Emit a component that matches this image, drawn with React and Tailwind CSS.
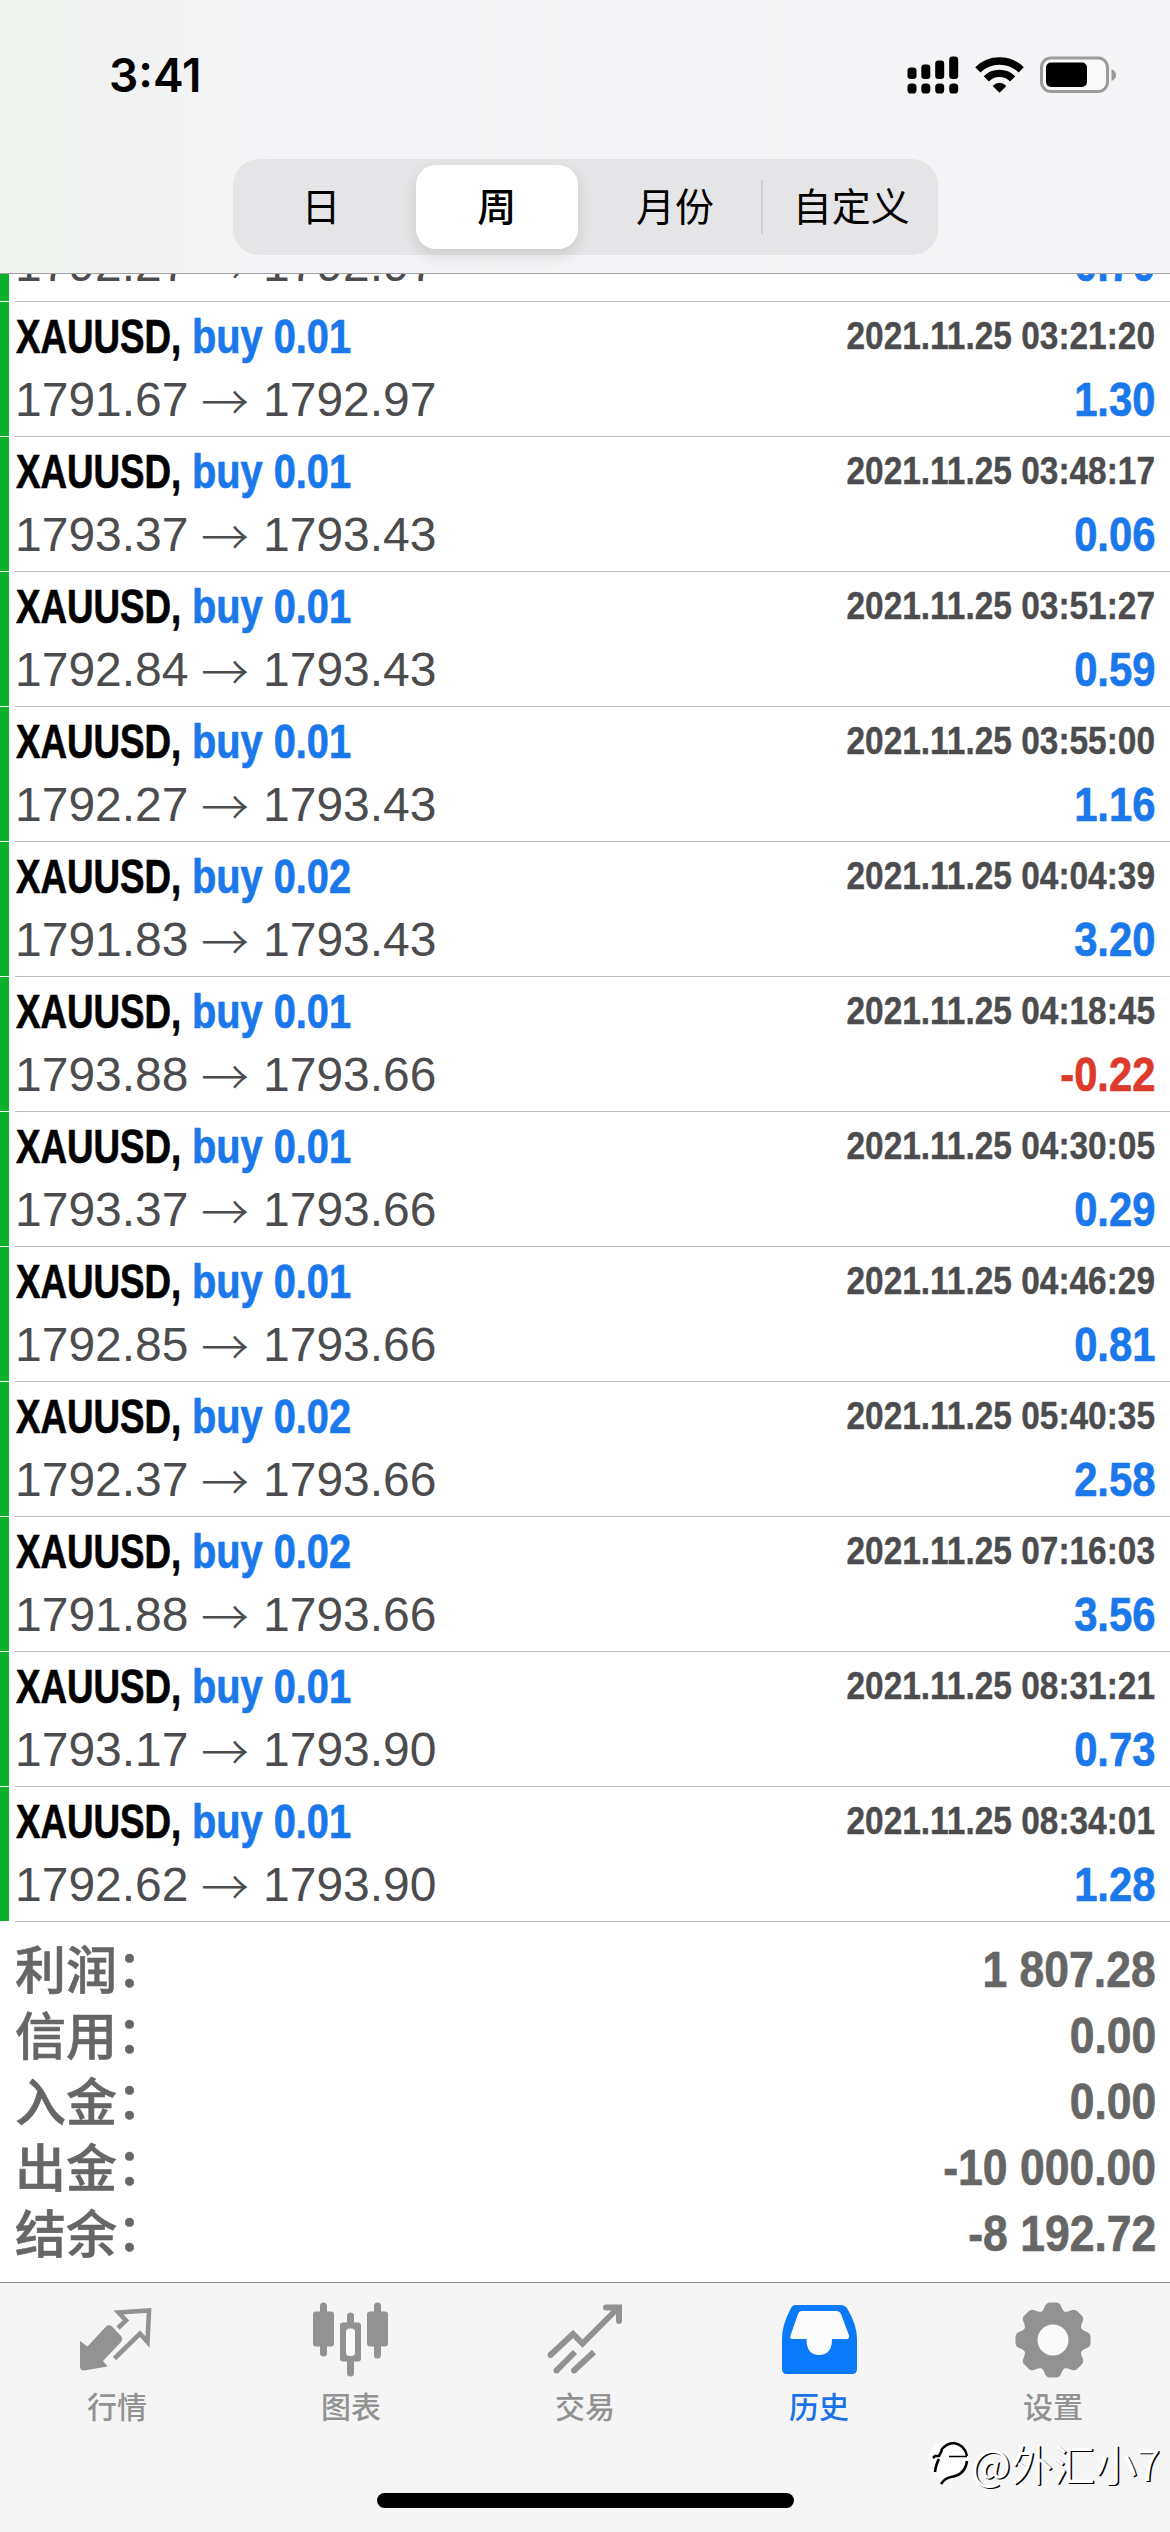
import React from "react";

const TRADES = [
  ["0.01", "1791.67", "1792.97", "2021.11.25 03:21:20", "1.30"],
  ["0.01", "1793.37", "1793.43", "2021.11.25 03:48:17", "0.06"],
  ["0.01", "1792.84", "1793.43", "2021.11.25 03:51:27", "0.59"],
  ["0.01", "1792.27", "1793.43", "2021.11.25 03:55:00", "1.16"],
  ["0.02", "1791.83", "1793.43", "2021.11.25 04:04:39", "3.20"],
  ["0.01", "1793.88", "1793.66", "2021.11.25 04:18:45", "-0.22"],
  ["0.01", "1793.37", "1793.66", "2021.11.25 04:30:05", "0.29"],
  ["0.01", "1792.85", "1793.66", "2021.11.25 04:46:29", "0.81"],
  ["0.02", "1792.37", "1793.66", "2021.11.25 05:40:35", "2.58"],
  ["0.02", "1791.88", "1793.66", "2021.11.25 07:16:03", "3.56"],
  ["0.01", "1793.17", "1793.90", "2021.11.25 08:31:21", "0.73"],
  ["0.01", "1792.62", "1793.90", "2021.11.25 08:34:01", "1.28"],
];

const SUMMARY = [
  ["利润", "1 807.28"],
  ["信用", "0.00"],
  ["入金", "0.00"],
  ["出金", "-10 000.00"],
  ["结余", "-8 192.72"],
];

function StatusBar() {
  return (
    <div className="flex h-[159px] items-start justify-between pt-[46px] pr-[54px] pl-[109px]">
      <div className="font-['Inter'] text-[46px] leading-[58px] font-semibold text-black">3:41</div>
      <div className="flex h-[57px] items-center">
        <svg className="h-[38px] w-[52px]" viewBox="0 0 52 38">
          <rect x="0.5" y="11.5" width="9" height="11.5" rx="3.2" />
          <rect x="14.3" y="8.5" width="9" height="14.5" rx="3.2" />
          <rect x="28.2" y="4.5" width="9" height="18.5" rx="3.2" />
          <rect x="42.2" y="0.5" width="9" height="22.5" rx="3.2" />
          <rect x="0.5" y="27.5" width="9" height="10" rx="3.6" />
          <rect x="14.3" y="27.5" width="9" height="10" rx="3.6" />
          <rect x="28.2" y="27.5" width="9" height="10" rx="3.6" />
          <rect x="42.2" y="27.5" width="9" height="10" rx="3.6" />
        </svg>
        <svg className="ml-[16px] h-[36px] w-[49px]" viewBox="0 0 49 36">
          <g fill="none" stroke="#000" strokeWidth="7.4">
            <path d="M2.8 12.8 A31 31 0 0 1 46.2 12.8" />
            <path d="M11.3 21.8 A18.8 18.8 0 0 1 37.7 21.8" />
          </g>
          <path d="M24.5 35.8 L17.6 28.9 Q24.5 22.6 31.4 28.9 Z" />
        </svg>
        <svg className="ml-[16px] h-[38px] w-[76px]" viewBox="0 0 76 38">
          <rect x="1.5" y="2" width="66" height="33.5" rx="9.5" fill="#fafafb" stroke="#9b9b9d" strokeWidth="3" />
          <rect x="6" y="6.5" width="41" height="24.5" rx="5" />
          <path d="M71.5 13 Q76 15 76 19 Q76 23 71.5 25 Z" fill="#9b9b9d" />
        </svg>
      </div>
    </div>
  );
}

function Segments() {
  return (
    <div className="mx-auto grid h-[96px] w-[705px] grid-cols-4 rounded-[26px] bg-[#e5e5e7] text-center font-['Noto_Sans_CJK_SC'] text-[39px] leading-[91px] text-black">
      <div className="pl-[1px]">日</div>
      <div className="mt-[6px] mr-[7px] ml-[7px] h-[84px] rounded-[20px] bg-white leading-[79px] font-medium shadow-[0_6px_16px_rgba(0,0,0,0.12)]">
        周
      </div>
      <div className="pl-[4px]">月份</div>
      <div className="flex">
        <div className="mt-[21px] h-[54px] w-[2px] bg-[#d0d0d2]" />
        <div className="flex-1 pl-[2px]">自定义</div>
      </div>
    </div>
  );
}

function TradeRow({ lots, open, close, time, profit }) {
  const color = profit.startsWith("-") ? "text-[#dc3a2c]" : "text-[#1a78ea]";
  return (
    <div className="flex h-[135px] shrink-0">
      <div className="mr-[6px] h-[134px] w-[9px] bg-[#0db02b]" />
      <div className="flex flex-1 justify-between border-b border-[#bcbcbe] pt-[3px] pr-[15px]">
        <div className="flex flex-col justify-end whitespace-nowrap pb-[5px]">
          {lots && (
            <div className="flex h-[63px] items-center pl-[1px] text-[48px] leading-[63px] font-bold [-webkit-text-stroke:0.7px]">
              <div className="w-[176px]">
                <span className="inline-block origin-left scale-x-[0.765] text-black">XAUUSD,</span>
              </div>
              <div>
                <span className="inline-block origin-left scale-x-[0.828] text-[#1a78ea]">buy {lots}</span>
              </div>
            </div>
          )}
          <div className="flex h-[63px] items-center text-[48px] leading-[63px] text-[#4c4c4e]">
            <span className="w-[186px]">{open}</span>
            <span className="w-[62px] font-['Noto_Sans_CJK_SC'] font-light">→</span>
            <span>{close}</span>
          </div>
        </div>
        <div className="flex flex-col items-end justify-end whitespace-nowrap pb-[5px] font-bold">
          {time && (
            <div className="h-[63px] origin-right scale-x-[0.857] text-[39px] leading-[61px] text-[#4c4c4e] [-webkit-text-stroke:0.4px]">{time}</div>
          )}
          <div className={"h-[63px] origin-right scale-x-[0.87] text-[48px] leading-[63px] [-webkit-text-stroke:0.7px] " + color}>{profit}</div>
        </div>
      </div>
    </div>
  );
}

function QuotesIcon() {
  return (
    <svg className="h-[78px] w-[78px]" viewBox="0 0 78 78">
      <g transform="translate(0 7)">
        <path d="M2 33 L9.5 38.5 L28 18.5 Q31 16 34 18.5 L43 28 Q45.5 31 43 34 L25 53 L29.5 58.5 L6 62.5 Q2 62.5 2 58 Z" fill="#929292" />
        <path d="M40 20 L48 12.5 L40.5 4.5 L71 2.5 L69.5 34 L62 25.5 L36.5 50.5" fill="none" stroke="#929292" strokeWidth="4.6" />
      </g>
    </svg>
  );
}

function ChartIcon() {
  return (
    <svg className="h-[78px] w-[78px]" viewBox="0 0 78 78" fill="#929292">
      <rect x="1" y="10.5" width="21" height="35" rx="3" />
      <rect x="8" y="1.5" width="7" height="54" rx="3.5" />
      <rect x="55" y="10.5" width="21" height="35" rx="3" />
      <rect x="62" y="1.5" width="7" height="56" rx="3.5" />
      <rect x="35" y="11.5" width="7" height="64" rx="3.5" />
      <rect x="28" y="21.5" width="21" height="39" rx="3" />
      <rect x="34" y="27.5" width="9" height="27.5" rx="3.5" fill="#fafafa" />
    </svg>
  );
}

function TradeIcon() {
  return (
    <svg className="h-[78px] w-[78px]" viewBox="0 0 78 78" fill="none" stroke="#929292" strokeWidth="6">
      <path d="M4.5 54 L27 33 L36.5 42.5 L71 8" />
      <path d="M60 6.5 H73 V20" strokeLinecap="round" />
      <path d="M10.5 69.5 L29 51" />
      <path d="M28 69.5 L48 51" />
      <g fill="#929292" stroke="none">
        <circle cx="4.5" cy="54" r="3" />
        <circle cx="10.5" cy="69.5" r="3" />
        <circle cx="28" cy="69.5" r="3" />
      </g>
    </svg>
  );
}

function HistoryIcon() {
  return (
    <svg className="h-[78px] w-[78px]" viewBox="0 0 78 78">
      <path d="M15 4 H61 Q65 4 67.5 8 Q77 24 77 38 V68 Q77 73 72 73 H7 Q2 73 2 68 V38 Q2 24 10.5 8 Q12.5 4 15 4 Z" fill="#0a7afa" />
      <path d="M22 10 H56 Q59.5 10 61 13 L69 34.5 Q69.5 38 66.5 38 H52 Q52 54 39 54 Q26.5 54 26.5 38 H12 Q9.5 37.5 10.5 34.5 L18 13 Q19 10 22 10 Z" fill="#fbfbfb" />
    </svg>
  );
}

function GearIcon() {
  return (
    <svg className="h-[78px] w-[78px]" viewBox="-39 -39 78 78">
      <g fill="#929292">
        <circle r="30.5" />
        {[0, 45, 90, 135, 180, 225, 270, 315].map((a) => (
          <path key={a} transform={`rotate(${a})`} d="M-14 -26 Q-9.5 -29 -8 -34 Q-6.5 -37.5 -3 -37.5 H3 Q6.5 -37.5 8 -34 Q9.5 -29 14 -26 Z" />
        ))}
      </g>
      <circle r="15.5" fill="#fafafa" />
    </svg>
  );
}

const TABS = [
  ["行情", QuotesIcon],
  ["图表", ChartIcon],
  ["交易", TradeIcon],
  ["历史", HistoryIcon],
  ["设置", GearIcon],
];

export default function App() {
  return (
    <div className="relative flex h-[2532px] w-[1170px] flex-col overflow-hidden bg-white font-['Liberation_Sans','Noto_Sans_CJK_SC',sans-serif]">
      <header className="h-[274px] shrink-0 border-b border-[#a2a2a4] bg-linear-to-r from-[#eef1ed] via-[#f4f4f6] via-20% to-[#f5f5f7]">
        <StatusBar />
        <Segments />
      </header>

      <div className="flex h-[28px] shrink-0 flex-col justify-end overflow-hidden">
        <TradeRow open="1792.27" close="1792.97" profit="0.70" />
      </div>
      {TRADES.map(([lots, open, close, time, profit]) => (
        <TradeRow key={time} lots={lots} open={open} close={close} time={time} profit={profit} />
      ))}

      <div className="flex flex-1 flex-col pt-[15px] pr-[14px] pl-[15px] font-bold text-[#666666]">
        {SUMMARY.map(([label, value]) => (
          <div key={label} className="flex h-[66px] items-center justify-between whitespace-nowrap">
            <div className="flex h-[66px] font-['Noto_Sans_CJK_SC'] text-[51px] leading-[60px] font-medium [-webkit-text-stroke:0.6px]">
              {label}
              <span className="-ml-[13px] font-['Noto_Sans_CJK_TC'] leading-[62px]">：</span>
            </div>
            <div className="origin-right scale-x-[0.89] text-[50px] leading-[67px] [-webkit-text-stroke:0.7px]">{value}</div>
          </div>
        ))}
      </div>

      <nav className="flex h-[250px] shrink-0 flex-col border-t border-[#8e8e90] bg-[#f5f5f5]">
        <div className="grid grid-cols-5 pt-[18px]">
          {TABS.map(([label, Icon]) => (
            <div key={label} className="flex flex-col items-center">
              <Icon />
              <div
                className={
                  "mt-[6px] font-['Noto_Sans_CJK_SC'] text-[30px] leading-[40px] font-medium " +
                  (label === "历史" ? "text-[#1a72e8]" : "text-[#929292]")
                }
              >
                {label}
              </div>
            </div>
          ))}
        </div>
        <div className="mx-auto mt-[68px] h-[15px] w-[417px] rounded-full bg-black" />
      </nav>

      <div className="absolute right-[10px] bottom-[44px] flex items-center">
        <svg className="h-[50px] w-[44px]" viewBox="0 0 44 50">
          <path d="M2 20 Q4 3 21 2 Q40 3 41 22 Q39 40 20 42 L15 47 L12 40 Q2 34 2 20 Z" fill="#fff" />
          <g fill="none" stroke="#000">
            <path d="M14 12 Q20 5 27 5 Q38 7 40 18 M40 23 Q38 37 24 39 Q18 40 14 46" strokeWidth="2.6" />
            <path d="M6 20 L8 18 H12 L15 12 M12 21 Q9 26 8 34" strokeWidth="2.6" />
            <path d="M22 18.5 H40" strokeWidth="1.5" />
          </g>
        </svg>
        <span className="font-['Noto_Sans_CJK_SC'] text-[42px] leading-[48px] whitespace-nowrap text-white [text-shadow:1.5px_1px_0_#000]">@外汇小7</span>
      </div>
    </div>
  );
}
